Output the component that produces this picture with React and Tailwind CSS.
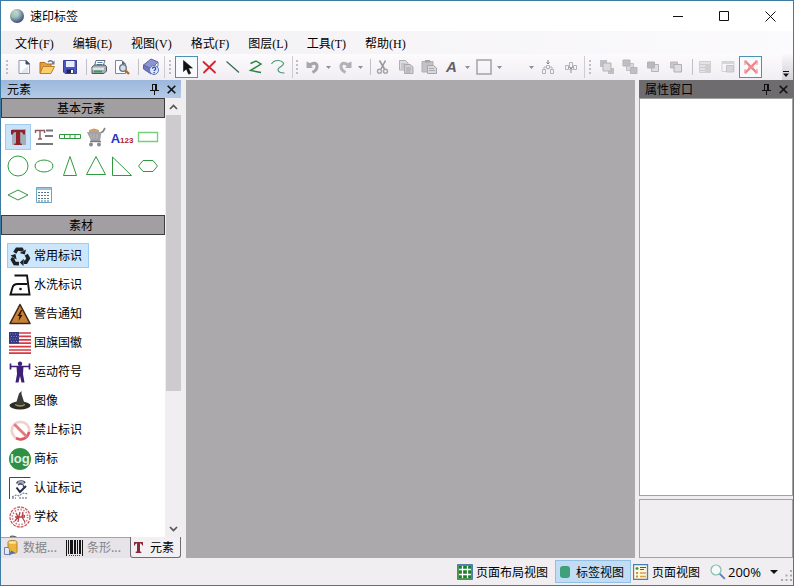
import React from 'react';

const sans = "font-['Noto_Sans_CJK_SC',sans-serif]";
const menuFont = "font-['Liberation_Serif','Noto_Sans_CJK_SC',serif]";

function Svg({ s = 16, w, h, box, children }) {
  return (
    <svg width={w || s} height={h || s} viewBox={box || `0 0 ${w || s} ${h || s}`} fill="none" aria-hidden="true" className="block shrink-0">
      {children}
    </svg>
  );
}

/* ---------- toolbar icons ---------- */
const NewIcon = () => (
  <Svg><path d="M3 1.500h7l3.500 3.500v9.500H3z" fill="#fbfcff" stroke="#8d97a6" /><path d="M10 1.500V5h3.500z" fill="#3c4a66" stroke="#3c4a66" /><path d="M5 13l7-6v7H5z" fill="#dfe6f2" /></Svg>
);
const OpenIcon = () => (
  <Svg>
    <path d="M1 3.500h5l1.500 1.500H12v9H1z" fill="#e2a23a" stroke="#b0701c" />
    <path d="M4 7.500h11.500L12 14.500H1z" fill="#fbcf6d" stroke="#c07f22" />
    <path d="M9 3c2-2 4-1.500 5 .5" stroke="#6b7a90" strokeWidth="1.500" /><path d="M15.500 1.500v4h-4z" fill="#6b7a90" />
  </Svg>
);
const SaveIcon = () => (
  <Svg>
    <path d="M1.500 1.500h13v13H3l-1.500-1.500z" fill="#4b56c4" stroke="#3a409a" />
    <path d="M4 2h8.500v6H4z" fill="#e9ecfb" /><path d="M4.500 10.500h7V14h-7z" fill="#20244f" /><path d="M9 11h2v3H9z" fill="#fff" />
  </Svg>
);
const PrintIcon = () => (
  <Svg>
    <path d="M5 1.500h9L12 7H3.500z" fill="#fff" stroke="#66707c" /><path d="M6.500 3.500h5M6 5.500h5" stroke="#5a87b5" />
    <path d="M1 8l2.500-2h10.500l1.500 1.500V12L13 14.500H1z" fill="#a7afb6" stroke="#4f5860" />
    <path d="M1.500 8.500h11.500v2.500H1.500z" fill="#dfe4e8" /><path d="M3 12.500h8" stroke="#3f9c55" strokeWidth="2" />
  </Svg>
);
const PreviewIcon = () => (
  <Svg>
    <path d="M1.500 1.500H8L11.500 5v9.500h-10z" fill="#fbfcff" stroke="#7d8796" /><path d="M8 1.500V5h3.500z" fill="#56637c" />
    <circle cx="9" cy="9" r="3.300" fill="#cfdfef" stroke="#66717f" strokeWidth="1.300" /><path d="M11.500 11.500l3.500 3.500" stroke="#b06a2d" strokeWidth="2.400" />
  </Svg>
);
const HelpIcon = () => (
  <Svg s={18}>
    <path d="M1.500 7L9 1l7 3-7 7z" fill="#8d94cf" stroke="#5b62a4" /><path d="M1.500 7v4L9 16v-5z" fill="#6f78bf" stroke="#5b62a4" />
    <path d="M9 11l7-7v4l-7 8z" fill="#fff" stroke="#6c73ab" />
    <circle cx="12" cy="12" r="4.500" fill="#dfe8fa" stroke="#5676bb" />
    <path d="M10.500 10.700c0-2 3.200-2 3.200 0 0 1.200-1.600 1.200-1.600 2.400" stroke="#2848a0" strokeWidth="1.200" /><path d="M11.500 14h1.300v1.200h-1.300z" fill="#2848a0" />
  </Svg>
);
const CursorIcon = () => (
  <Svg><path d="M4.500 1.500v11l2.800-2.600 2.400 5.300 2-.9-2.300-5.200h4z" fill="#111" stroke="#111" strokeWidth=".6" /></Svg>
);
const DeleteIcon = () => (
  <Svg><path d="M1.500 3c3 3 7.500 6.500 11.500 10.500M13 2.500C9 6.500 5.500 10 2 13.500" stroke="#d8232c" strokeWidth="1.800" strokeLinecap="round" /></Svg>
);
const LineIcon = () => (<Svg><path d="M1.500 2.500l12.500 11" stroke="#2f6a50" strokeWidth="1.200" /></Svg>);
const PolyIcon = () => (<Svg><path d="M2.500 4.500L8 2l5 3-10.500 6.500L13 13.500" stroke="#23853a" strokeWidth="1.400" /></Svg>);
const CurveIcon = () => (<Svg><path d="M.5 5C3 .5 10 .5 12.500 4c1 3-5.500 4-5.500 6.500C7 13 10 14 13.500 14" stroke="#4a9572" strokeWidth="1.200" /></Svg>);
const UndoIcon = () => (
  <Svg><path d="M1.500 2.500v6.500H8L5.800 6.800c.8-.8 2-1.300 3-1" fill="#a9a8ac" /><path d="M5 6.500c2.500-3.500 7-3 7 .8 0 3-1.500 4.700-4.500 6.200" stroke="#a5a4a8" strokeWidth="3" /></Svg>
);
const RedoIcon = () => (
  <Svg><path d="M14.500 2.500v6.500H8l2.200-2.200c-.8-.8-2-1.300-3-1" fill="#b0afb3" /><path d="M11 6.500C8.500 3 4 3.500 4 7.300c0 3 1.500 4.700 4.500 6.200" stroke="#b3b2b6" strokeWidth="3" /></Svg>
);
const CutIcon = () => (
  <Svg><path d="M4.500 1.500L9.500 10M10.500 1.500L6 10" stroke="#98979b" strokeWidth="1.600" /><circle cx="4.500" cy="12.300" r="2" stroke="#a3a2a6" strokeWidth="1.400" /><circle cx="10.500" cy="12.300" r="2" stroke="#a3a2a6" strokeWidth="1.400" /></Svg>
);
const CopyIcon = () => (
  <Svg>
    <path d="M1.500 1.500h6l2.500 2.500v7H1.500z" fill="#dddce0" stroke="#b0afb3" /><path d="M3 5h5M3 7h5M3 9h3" stroke="#b3b2b6" />
    <path d="M6.500 5.500h5.500l3 2.500v6.500H6.500z" fill="#d0cfd3" stroke="#a9a8ac" /><path d="M8 9h5M8 11h5M8 13h4" stroke="#a5a4a8" />
  </Svg>
);
const PasteIcon = () => (
  <Svg>
    <path d="M1 2.500h11V13H1z" fill="#c3c2c6" stroke="#b0afb3" /><path d="M4 1h5v2.500H4z" fill="#a5a4a8" />
    <path d="M6.500 6.500h6l3 2.500v5.500h-9z" fill="#d9d8dc" stroke="#a5a4a8" /><path d="M8 9.500h5M8 11.500h6" stroke="#acabaf" />
  </Svg>
);
const BoxIcon = () => (<Svg><path d="M1 1h14v14H1z" stroke="#a3a2a6" strokeWidth="1.500" /></Svg>);
const SplitIcon = () => (
  <Svg><path d="M8 1v4M6.500 3.500L8 5l1.500-1.500" stroke="#7f7e82" /><path d="M6.500 6.500h3v3h-3zM2.500 10.500h3v4h-3zM10.500 10.500h3v4h-3z" stroke="#b2b1b5" /><path d="M8 9v1.500M4 10.500V8h2.500M12 10.500V8H9.500" stroke="#b2b1b5" /></Svg>
);
const JoinIcon = () => (
  <Svg><path d="M6.500 3.500h3v5h-3zM2.500 6.500h3v4h-3zM10.500 6.500h3v4h-3z" stroke="#b2b1b5" /><path d="M8 14V8.500M6.500 10.500L8 9l1.500 1.500M5.500 8.500h1M9.500 8.500h1" stroke="#8b8a8e" /></Svg>
);
const LayerTop = () => (<Svg><path d="M1 1h7v7H1zM9 9h6v6H9z" fill="#c0bfc3" /><path d="M4 4h8v8H4z" fill="#dad9dc" stroke="#b2b1b5" /></Svg>);
const LayerBottom = () => (<Svg><path d="M4.500 4.500h7v7h-7z" fill="#dad9dc" stroke="#c0bfc3" /><path d="M1 1h7v6H1zM8.500 8.500h6.500v6H8.500z" fill="#bfbec2" stroke="#b5b4b8" /></Svg>);
const LayerUp = () => (<Svg><path d="M6.500 5.500h7v7h-7z" fill="#dfdee1" stroke="#b5b4b8" /><path d="M2.500 3h7v6h-7z" fill="#b9b8bc" stroke="#b2b1b5" /></Svg>);
const LayerDown = () => (<Svg><path d="M2.500 3h7v6h-7z" fill="#c6c5c9" stroke="#bbbabe" /><path d="M6 5.500h7.500v7.500H6z" fill="#dddce0" stroke="#b0afb3" /></Svg>);
const GroupIcon = () => (<Svg><path d="M2.500 2.500h11v11h-11z" fill="#e3e2e5" stroke="#d0cfd3" /><path d="M3 5.500h5M3 8.500h5M3 11.500h5" stroke="#cbcace" /><path d="M8 5h5.500v8H8z" fill="#cfced1" /></Svg>);
const UngroupIcon = () => (<Svg><path d="M2 2.500h12v10H2z" stroke="#d3d2d6" /><path d="M2 3h12v2H2zM7 7h7v6H7z" fill="#d6d5d8" /><path d="M6.500 6.500h7v6.500h-7z" stroke="#c4c3c7" /></Svg>);
const CrossIcon = () => (
  <Svg><path d="M2 2l12 12M14 2L2 14" stroke="#f08384" strokeWidth="2.400" /><path d="M2 6V2h2M12 2h2v4M14 10v4h-2M4 14H2v-4M5 8h6" stroke="#f2989a" strokeWidth="1.200" /></Svg>
);

/* ---------- toolbar parts ---------- */
const Grip = ({ narrow }) => (
  <span className={`${narrow ? 'w-2' : 'w-[10px]'} flex h-[22px] shrink-0 items-center justify-center`}>
    <Svg w={2} h={14}><path d="M0 0h2v2H0zM0 4h2v2H0zM0 8h2v2H0zM0 12h2v2H0z" fill="#c0bec3" /></Svg>
  </span>
);
const Sep = () => <span className="h-4 w-[6px] shrink-0 border-r border-[#c2c0c5]" />;
const End = () => <span className="h-[22px] w-[3px] shrink-0 border-r border-[#cfcdd2]" />;
const Tool = ({ label, active, children }) => (
  <button type="button" aria-label={label} className={`${active ? 'border border-[#4a93b5] bg-[#f8fafd]' : ''} flex h-[22px] w-[23px] shrink-0 items-center justify-center`}>
    {children}
  </button>
);
const Drop = ({ label }) => (
  <button type="button" aria-label={label} className="flex h-[22px] w-[9px] shrink-0 items-center justify-center">
    <Svg w={5} h={3}><path d="M0 0h5L2.500 3z" fill="#8f8e92" /></Svg>
  </button>
);

const Toolbar = () => (
  <div role="toolbar" className="flex h-[26px] shrink-0 items-center overflow-hidden bg-linear-to-b from-[#fcfbfd] to-[#f0eef2]">
    <span className="w-px shrink-0" />
    <Grip />
    <Tool label="新建"><NewIcon /></Tool>
    <Tool label="打开"><OpenIcon /></Tool>
    <Tool label="保存"><SaveIcon /></Tool>
    <Sep />
    <Tool label="打印"><PrintIcon /></Tool>
    <Tool label="打印预览"><PreviewIcon /></Tool>
    <Sep />
    <Tool label="帮助"><HelpIcon /></Tool>
    <End />
    <Grip />
    <Tool label="选择" active><CursorIcon /></Tool>
    <Tool label="删除"><DeleteIcon /></Tool>
    <Tool label="直线"><LineIcon /></Tool>
    <Tool label="折线"><PolyIcon /></Tool>
    <Tool label="曲线"><CurveIcon /></Tool>
    <End />
    <Grip narrow />
    <Tool label="撤销"><UndoIcon /></Tool>
    <Drop label="撤销列表" />
    <Tool label="重做"><RedoIcon /></Tool>
    <Drop label="重做列表" />
    <Sep />
    <Tool label="剪切"><CutIcon /></Tool>
    <Tool label="复制"><CopyIcon /></Tool>
    <Tool label="粘贴"><PasteIcon /></Tool>
    <Tool label="字体"><span className="font-['Liberation_Sans',sans-serif] text-[15px] leading-4 font-bold text-[#626164] italic">A</span></Tool>
    <Drop label="字体选项" />
    <Tool label="边框"><BoxIcon /></Tool>
    <Drop label="边框选项" />
    <Tool label="线型" />
    <Drop label="线型选项" />
    <Tool label="拆分"><SplitIcon /></Tool>
    <Tool label="合并"><JoinIcon /></Tool>
    <End />
    <Grip />
    <Tool label="置于顶层"><LayerTop /></Tool>
    <Tool label="置于底层"><LayerBottom /></Tool>
    <Tool label="上移一层"><LayerUp /></Tool>
    <Tool label="下移一层"><LayerDown /></Tool>
    <Sep />
    <Tool label="组合"><GroupIcon /></Tool>
    <Tool label="取消组合"><UngroupIcon /></Tool>
    <Tool label="锁定" active><CrossIcon /></Tool>
    <button type="button" aria-label="更多" className="ml-auto flex w-[11px] shrink-0 items-end justify-center self-stretch rounded-tl-sm bg-linear-to-b from-[#f9f7fb] to-[#d3d1d6] pr-1 pb-[3px]">
      <Svg w={6} h={6}><path d="M0 .5h6" stroke="#111" /><path d="M0 2.500h6L3 6z" fill="#111" /></Svg>
    </button>
  </div>
);

/* ---------- element palette ---------- */
const green = '#2f9a3f';
const elements = [
  ['文本', <Svg s={22}><rect x="5" y="3" width="14" height="16" fill="#a3b0bb" /><path d="M4 4h14v4.500h-1.800c-.3-1.700-1-2.500-3-2.500v10.300c0 1.200.5 1.500 1.800 1.500v1.200H7.200v-1.200c1.300 0 1.800-.3 1.800-1.500V6c-2 0-3 .8-3.200 2.500H4z" fill="#8f2029" /></Svg>],
  ['多行文本', <Svg s={22}><path d="M2 4.500h10M7 4.500v9M5 13h4M2.500 4v3M11.500 4v3" stroke="#8d5961" strokeWidth="1.400" /><path d="M13 4.500h7M12 10h8M3 18h17" stroke="#76767c" strokeWidth="1.800" /></Svg>],
  ['表格条', <Svg s={22}><path d="M.5 8.500h21v4H.5zM5.500 8v5M11 8v5M16 8v5" stroke={green} /></Svg>],
  ['商品', <Svg s={22}><path d="M4 6V4l5-1.500L14 4v2z" fill="#cf9f66" /><path d="M15 7l3-1.500 2-3.500" stroke="#85858a" strokeWidth="1.700" /><path d="M2 6h14.500l-1.500 9H6z" fill="#a2a2a7" /><path d="M6 8v5M9 8v5M12 8v5" stroke="#b8b8bd" /><path d="M5 15.500h11" stroke="#77777c" strokeWidth="1.400" /><circle cx="6" cy="18.500" r="2" fill="#88888e" /><circle cx="14" cy="18.500" r="2" fill="#88888e" /></Svg>],
  ['流水号', <span className="flex items-end pt-[3px] font-['Liberation_Sans',sans-serif] leading-4 font-bold"><span className="text-[13px] text-[#2434c8]">A</span><span className="text-[8px] leading-3 text-[#b02040]">123</span></span>],
  ['矩形', <Svg s={22}><path d="M1.500 6.500h19v9h-19z" stroke="#6fd276" strokeWidth="1.300" /></Svg>],
  ['圆', <Svg s={22}><circle cx="11" cy="11" r="10" stroke={green} /></Svg>],
  ['椭圆', <Svg s={22}><ellipse cx="11" cy="11" rx="9" ry="6" stroke={green} /></Svg>],
  ['等腰三角形', <Svg s={22}><path d="M11 1.500L17.500 20.500h-13z" stroke={green} /></Svg>],
  ['三角形', <Svg s={22}><path d="M11 1.500l9.500 18h-19z" stroke={green} /></Svg>],
  ['直角三角形', <Svg s={22}><path d="M1.500 2v18.500h19z" stroke={green} /></Svg>],
  ['六边形', <Svg s={22}><path d="M1.500 11L6 5.500h10l4.500 5.500-4.500 5.500H6z" stroke={green} /></Svg>],
  ['菱形', <Svg s={22}><path d="M1 11l10-5 10 5-10 5z" stroke={green} /></Svg>],
  ['表格', <Svg s={22}><path d="M3.500 3.500h15v15h-15z" stroke="#6aa6c2" /><path d="M4 4h14v2H4z" fill="#9bc4dc" /><path d="M5 8.500h12M5 11.500h12M5 14.500h12M5 17h12" stroke="#55788c" strokeDasharray="2 1" /></Svg>],
];

/* ---------- material icons ---------- */
const arrow = (
  <>
    <path d="M5.800 7.800L8 4.200h4.500l1 1.800" stroke="#1c2126" strokeWidth="3.600" />
    <path d="M17 4.500l-1.200 5-5.200-1.600z" fill="#1c2126" />
  </>
);
const materials = [
  ['常用标识', (
    <Svg s={22}>
      {arrow}
      <g transform="rotate(120 11 12)">{arrow}</g>
      <g transform="rotate(240 11 12)">{arrow}</g>
    </Svg>
  )],
  ['水洗标识', <Svg s={22}><path d="M5.500 1.500H18l2.500 19H1.500l2-7c.8-2.500 2.500-3.500 5-3.500h9.500" stroke="#111" strokeWidth="1.900" /><circle cx="11.500" cy="15" r="1.300" fill="#111" /></Svg>],
  ['警告通知', <Svg s={22}><path d="M11 1.500L21 20.500H1z" fill="#c98135" stroke="#3f2818" strokeWidth="1.600" strokeLinejoin="round" /><path d="M12 7l-3.500 6h2L9.500 18l4-6h-2.300l2-5z" fill="#20150e" /></Svg>],
  ['国旗国徽', (
    <Svg s={22}>
      <path d="M0 0h22v22H0z" fill="#fff" /><path d="M0 1h22M0 4.400h22M0 7.800h22M0 11.200h22M0 14.600h22M0 18h22M0 21.200h22" stroke="#d53a45" strokeWidth="1.700" />
      <path d="M0 0h10v11.500H0z" fill="#34367f" /><path d="M1 2h8M2 4.500h8M1 7h8M2 9.500h8" stroke="#8d8fc4" strokeDasharray="1 1.500" />
    </Svg>
  )],
  ['运动符号', <Svg s={22}><circle cx="11" cy="2.700" r="2.200" fill="#3d1e78" /><path d="M1 5.500h20M1.500 2.500v6M20.500 2.500v6" stroke="#3d1e78" strokeWidth="1.700" /><path d="M7.500 5h7l-.5 8 1.500 8.500h-3L11 15l-1.500 6.500h-3L8 13z" fill="#3d1e78" /></Svg>],
  ['图像', <Svg s={22}><ellipse cx="11" cy="15.500" rx="10.500" ry="4" fill="#2a2b22" /><path d="M6.500 15L10 3.500 12.500 1v3l3.500 11c-3 2.500-7 2.500-9.500 0z" fill="#3b3b38" /><path d="M6 14.500c3 2 7.500 2 10 0" stroke="#a3964a" strokeWidth="1.300" /></Svg>],
  ['禁止标识', <Svg s={22}><circle cx="11.500" cy="11.500" r="8.700" stroke="#f3d0d0" strokeWidth="2.800" /><path d="M20 12.800a8.700 8.700 0 0 1-13 6.400" stroke="#de5a5e" strokeWidth="2.600" /><path d="M5.300 5.300l12.800 12.800" stroke="#e5787b" strokeWidth="2.800" /></Svg>],
  ['商标', (
    <span className="flex h-[22px] w-[22px] items-center justify-center overflow-hidden rounded-full bg-[#2f9044] font-['Liberation_Sans',sans-serif] text-[13px] leading-none font-bold text-[#dff2e2]">log</span>
  )],
  ['认证标记', <Svg s={22}><path d="M.5 22V.5h21" stroke="#3b4664" /><path d="M8 6c0-3 8-3 8 0M7 6h9M10 4h3M9 8c3-2 7 0 5 2" stroke="#454d6c" strokeWidth="1.200" /><path d="M7.500 10.500l3.500 4.500 6-6" stroke="#232c4e" strokeWidth="2" /><path d="M3 20l4-2 3 1 4-3 5 1M3 21h4m3 0h8" stroke="#59617c" strokeDasharray="2 1" /></Svg>],
  ['学校', <Svg s={22}><circle cx="11" cy="11" r="10" stroke="#c25a60" strokeWidth="1.300" strokeDasharray="3 1" /><circle cx="11" cy="11" r="7.600" stroke="#cf7b80" strokeWidth="1.600" strokeDasharray="1.500 1.500" /><path d="M7 7l2 4-3 4M11 6l-1 4-1 6M14 6l-1 5 3 5M6 11h10M13 8l3 2" stroke="#b2434a" strokeWidth="1.300" /></Svg>],
];

const Pin = () => (<Svg w={9} h={11}><path d="M2.500 0v6.500M6.500 0v6.500M2 .5h5M0 6.500h9M4.500 7v4" stroke="#111" /><path d="M5.500 1v5" stroke="#111" /></Svg>);
const Close = () => (<Svg s={9}><path d="M.7.700l7.600 7.600M8.300.700L.7 8.300" stroke="#111" strokeWidth="1.600" /></Svg>);

const PanelHead = ({ title, className }) => (
  <div className={`${className} flex h-[18px] shrink-0 items-center pr-[5px] pl-[6px]`}>
    <h2 className="flex-1 text-[12px] leading-[18px]">{title}</h2>
    <button type="button" aria-label="固定" className="mr-2"><Pin /></button>
    <button type="button" aria-label="关闭"><Close /></button>
  </div>
);

const Section = ({ children }) => (
  <h3 className="h-5 shrink-0 border border-[#3d3c3f] bg-[#a19fa2] pr-1 text-center text-[12px] leading-[18px]">{children}</h3>
);

const Sidebar = () => (
  <aside className="flex w-[180px] shrink-0 flex-col">
    <PanelHead title="元素" className="bg-linear-to-b from-[#9bb7dc] to-[#b4cae7]" />
    <div className="flex min-h-0 flex-1">
      <div className="min-w-0 flex-1 overflow-hidden bg-white">
        <Section>基本元素</Section>
        <div className="grid grid-cols-6 gap-y-[3px] px-1 pt-[6px] pb-[7px]">
          {elements.map(([name, icon], i) => (
            <button key={name} type="button" aria-label={name} className={`${i === 0 ? 'border border-[#9fcbee] bg-[#cbe3f8]' : ''} flex h-[26px] items-center justify-center`}>
              {icon}
            </button>
          ))}
        </div>
        <Section>素材</Section>
        <ul className="flex flex-col items-start gap-1 pt-2 pl-[6px]">
          {materials.map(([name, icon], i) => (
            <li key={name}>
              <button type="button" className={`${i === 0 ? 'border-[#99ccf3] bg-[#cce6fc]' : 'border-transparent'} flex h-[25px] items-center gap-[3px] border pr-[6px] pl-px text-[12px] leading-[18px]`}>
                {icon}
                <span className="pb-[2px]">{name}</span>
              </button>
            </li>
          ))}
          <li>
            <button type="button" aria-label="其他" className="flex h-[25px] items-center border border-transparent pl-px">
              <Svg s={22}><path d="M1 1.500c3-1 6 0 8 2" stroke="#555" strokeWidth="1.200" /></Svg>
            </button>
          </li>
        </ul>
      </div>
      <div className="flex w-4 shrink-0 flex-col bg-[#f0eef1] pl-px">
        <button type="button" aria-label="向上滚动" className="flex h-[17px] items-center justify-center"><Svg w={9} h={6}><path d="M1 5l3.500-3.500L8 5" stroke="#555" strokeWidth="1.700" /></Svg></button>
        <div className="h-[276px] bg-[#cdcbce]" />
        <button type="button" aria-label="向下滚动" className="mt-auto flex h-[17px] items-center justify-center"><Svg w={9} h={6}><path d="M1 1l3.500 3.500L8 1" stroke="#555" strokeWidth="1.700" /></Svg></button>
      </div>
    </div>
    <div role="tablist" className="flex h-[21px] shrink-0 text-[12px] leading-[18px] text-[#858387]">
      <button type="button" role="tab" aria-selected="false" className="flex w-[64px] items-center gap-[3px] border-t border-[#a5a3a7] bg-[#e6e4e8] pl-[3px]">
        <Svg><path d="M4 2c0-2 9-2 9 0v10c0 2-9 2-9 0z" fill="#edb53c" stroke="#b9822b" /><ellipse cx="8.500" cy="2.500" rx="4" ry="1.300" fill="#fbe39a" /><path d="M.5 7.500h4l1 2v5h-5z" fill="#e3e9f4" stroke="#7782a0" /><path d="M5 15.500l6-3-4-2z" fill="#4c6ebc" /></Svg>
        <span className="pb-[2px]">数据...</span>
      </button>
      <button type="button" role="tab" aria-selected="false" className="flex w-[65px] items-center gap-1 border-t border-[#a5a3a7] bg-[#e6e4e8] pl-px">
        <Svg w={17} h={16}><path d="M0 0h1v16H0zM2 0h1v14H2zM4 0h3v14H4zM8 0h2v14H8zM11 0h1v14h-1zM13 0h2v14h-2zM16 0h1v16h-1z" fill="#151515" /><path d="M3 15.500h11" stroke="#444" strokeDasharray="1 1" /></Svg>
        <span className="pb-[2px]">条形...</span>
      </button>
      <button type="button" role="tab" aria-selected="true" className="flex flex-1 items-center gap-[7px] rounded-b-[3px] border-r border-b border-l border-[#6d6c70] bg-[#f2f0f3] pl-[3px] text-black">
        <Svg w={9} h={11}><path d="M0 0h9v3.500H8C7.800 2 7.300 1.500 6 1.500V8.500c0 1 .3 1.300 1.300 1.300V11H1.700V9.800C2.700 9.800 3 9.500 3 8.500v-7C1.700 1.500 1.200 2 1 3.500H0z" fill="#8a2a3a" /></Svg>
        <span>元素</span>
      </button>
    </div>
  </aside>
);

const StatusBar = () => (
  <footer className="flex h-[27px] shrink-0 items-center justify-end text-[12px] leading-[18px]">
    <button type="button" className="flex h-[23px] items-center gap-[3px] pr-[7px]">
      <Svg><path d="M.5.500h15v15H.5z" fill="#4e9a55" stroke="#4c7db5" /><path d="M2 2h12v12H2z" fill="#1b7e2b" /><path d="M2 5.500h12M2 10.500h12M5.500 2v12M10.500 2v12" stroke="#fff" strokeWidth="1.300" /></Svg>
      页面布局视图
    </button>
    <button type="button" aria-pressed="true" className="flex h-[23px] items-center gap-[6px] border border-[#92c0e4] bg-[#c2dcf3] pr-[6px] pl-1">
      <Svg w={10} h={12}><rect width="10" height="12" rx="3" fill="#3f9f78" /></Svg>
      标签视图
    </button>
    <button type="button" className="flex h-[23px] items-center gap-[3px] pr-[10px] pl-[2px]">
      <Svg><path d="M.5.500h14v15H.5z" fill="#fdf9dc" stroke="#477cc0" strokeWidth="1.300" /><path d="M2.500 4.500h3M4 3v3" stroke="#3b9446" strokeWidth="1.300" /><path d="M7 3.500h6M7 5.500h4" stroke="#555" /><path d="M3 9h2M3 12.500h2" stroke="#e08c32" strokeWidth="2" /><path d="M7 9h6M7 12.500h6" stroke="#dd9c46" strokeWidth="1.400" /></Svg>
      页面视图
    </button>
    <label htmlFor="zoom" aria-label="缩放" className="mr-[2px]">
      <Svg><circle cx="6" cy="6" r="5" fill="#f4faf8" stroke="#84bdb0" strokeWidth="1.200" /><path d="M9.800 9.800l5 5" stroke="#5e7cc0" strokeWidth="1.900" /></Svg>
    </label>
    <span className="grid items-center">
      <select id="zoom" defaultValue="200%" className="col-start-1 row-start-1 w-[50px] appearance-none bg-transparent font-['Open_Sans',sans-serif] text-[13px] leading-[18px]">
        <option>100%</option>
        <option>200%</option>
      </select>
      <span className="pointer-events-none col-start-1 row-start-1 justify-self-end"><Svg w={8} h={4}><path d="M0 0h8L4 4z" fill="#111" /></Svg></span>
    </span>
    <span className="mr-px ml-[3px] self-end pb-1">
      <Svg s={11}><path d="M9 0h2v2H9zM4.500 4.500h2v2h-2zM9 4.500h2v2H9zM0 9h2v2H0zM4.500 9h2v2h-2zM9 9h2v2H9z" fill="#aaa8ac" /></Svg>
    </span>
  </footer>
);

const menus = ['文件(F)', '编辑(E)', '视图(V)', '格式(F)', '图层(L)', '工具(T)', '帮助(H)'];

export default function App() {
  return (
    <div className={`${sans} flex h-screen flex-col overflow-hidden border border-[#3d7ba3] bg-[#f0eef1] text-black`}>
      <header className="flex h-[30px] shrink-0 items-center bg-white pl-2">
        <svg width="16" height="16" viewBox="0 0 16 16" aria-hidden="true">
          <defs>
            <radialGradient id="globe" cx=".38" cy=".3" r=".75">
              <stop offset="0" stopColor="#e4eef2" /><stop offset=".45" stopColor="#8fb0b4" /><stop offset="1" stopColor="#343f75" />
            </radialGradient>
          </defs>
          <circle cx="8" cy="8" r="7" fill="url(#globe)" /><path d="M3 5c3-3 5-1 5 1s-2 4-4 4-2-3-1-5z" fill="#9fc49b" opacity=".6" />
        </svg>
        <h1 className="ml-[5px] flex-1 text-[12px] leading-[18px]">速印标签</h1>
        <button type="button" aria-label="最小化" className="flex h-[30px] w-[46px] items-center justify-center"><Svg w={10} h={11}><path d="M0 5.500h10" stroke="#111" /></Svg></button>
        <button type="button" aria-label="最大化" className="flex h-[30px] w-[46px] items-center justify-center"><Svg s={10}><path d="M.5.500h9v9h-9z" stroke="#111" /></Svg></button>
        <button type="button" aria-label="关闭窗口" className="flex h-[30px] w-[46px] items-center justify-center"><Svg s={11}><path d="M.5.500l10 10M10.500.500l-10 10" stroke="#111" /></Svg></button>
      </header>
      <nav className={`${menuFont} flex h-[23px] shrink-0 items-center gap-px bg-linear-to-r from-[#f1eff2] to-[#fbfafc] pt-[2px] pl-[5px]`}>
        {menus.map((m) => (
          <button key={m} type="button" className="px-[9px] text-[12px] leading-[18px]">{m}</button>
        ))}
      </nav>
      <Toolbar />
      <main className="flex min-h-0 flex-1">
        <Sidebar />
        <div className="ml-[5px] flex-1 bg-[#aba9ac]" />
        <aside className="ml-1 flex w-[154px] shrink-0 flex-col">
          <PanelHead title="属性窗口" className="bg-[#6e6c6f]" />
          <div className="flex-1 border border-[#a3a1a4] bg-white" />
          <div className="mt-[3px] h-[59px] border border-[#a3a1a4]" />
        </aside>
      </main>
      <StatusBar />
    </div>
  );
}
